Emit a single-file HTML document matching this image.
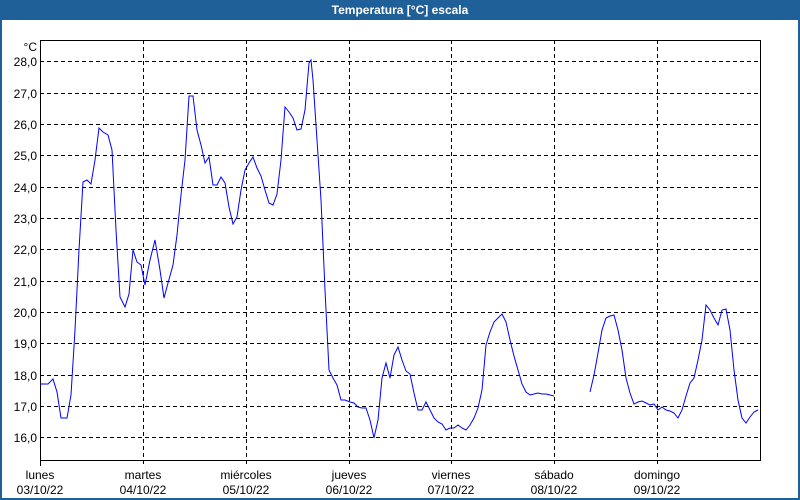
<!DOCTYPE html>
<html><head><meta charset="utf-8"><style>
html,body{margin:0;padding:0;width:800px;height:500px;overflow:hidden;background:#fff}
</style></head><body>
<svg width="800" height="500" xmlns="http://www.w3.org/2000/svg" font-family="Liberation Sans, sans-serif">
<rect x="0" y="0" width="800" height="500" fill="#1f6098"/>
<rect x="2" y="20" width="796" height="478" fill="#fff"/>
<text x="400" y="14" fill="#fff" font-size="12" font-weight="bold" text-anchor="middle">Temperatura [°C] escala</text>
<g stroke="#000" stroke-dasharray="4,3" stroke-width="1">
<line x1="40" x2="760" y1="61.5" y2="61.5"/><line x1="40" x2="760" y1="93.5" y2="93.5"/><line x1="40" x2="760" y1="124.5" y2="124.5"/><line x1="40" x2="760" y1="155.5" y2="155.5"/><line x1="40" x2="760" y1="187.5" y2="187.5"/><line x1="40" x2="760" y1="218.5" y2="218.5"/><line x1="40" x2="760" y1="249.5" y2="249.5"/><line x1="40" x2="760" y1="281.5" y2="281.5"/><line x1="40" x2="760" y1="312.5" y2="312.5"/><line x1="40" x2="760" y1="343.5" y2="343.5"/><line x1="40" x2="760" y1="375.5" y2="375.5"/><line x1="40" x2="760" y1="406.5" y2="406.5"/><line x1="40" x2="760" y1="437.5" y2="437.5"/>
<line y1="40" y2="466" x1="143.5" x2="143.5"/><line y1="40" y2="466" x1="246.5" x2="246.5"/><line y1="40" y2="466" x1="349.5" x2="349.5"/><line y1="40" y2="466" x1="451.5" x2="451.5"/><line y1="40" y2="466" x1="554.5" x2="554.5"/><line y1="40" y2="466" x1="657.5" x2="657.5"/>
</g>
<rect x="40.5" y="40.5" width="720" height="420" fill="none" stroke="#000"/>
<line x1="40.5" x2="40.5" y1="460" y2="466" stroke="#000"/>
<g font-size="12" fill="#000" text-anchor="end">
<text x="37" y="51">°C</text>
<text x="37" y="66">28,0</text><text x="37" y="98">27,0</text><text x="37" y="129">26,0</text><text x="37" y="160">25,0</text><text x="37" y="192">24,0</text><text x="37" y="223">23,0</text><text x="37" y="254">22,0</text><text x="37" y="286">21,0</text><text x="37" y="317">20,0</text><text x="37" y="348">19,0</text><text x="37" y="380">18,0</text><text x="37" y="411">17,0</text><text x="37" y="442">16,0</text>
</g>
<g font-size="12" fill="#000" text-anchor="middle">
<text x="40" y="479">lunes</text><text x="40" y="494">03/10/22</text>
<text x="143" y="479">martes</text><text x="143" y="494">04/10/22</text>
<text x="246" y="479">miércoles</text><text x="246" y="494">05/10/22</text>
<text x="349" y="479">jueves</text><text x="349" y="494">06/10/22</text>
<text x="451" y="479">viernes</text><text x="451" y="494">07/10/22</text>
<text x="554" y="479">sábado</text><text x="554" y="494">08/10/22</text>
<text x="657" y="479">domingo</text><text x="657" y="494">09/10/22</text>
</g>
<g fill="none" stroke="#0000ff" stroke-width="1">
<polyline points="40,384 48,384 53,379 57,392 61,418 67,418 71,395 75,330 79,250 83,182 87,180 91,184 95,160 99,128 103,132 108,135 112,150 116,230 120,297 125,307 129,294 133,250 137,262 141,265 145,285 150,260 155,240 160,270 164,298 168,283 173,265 177,235 181,195 185,160 189,96 193,96 197,130 201,145 205,163 209,157 213,185 217,185 221,177 225,183 229,207 233,224 237,217 241,190 245,170 249,163 253,157 257,168 261,176 265,190 269,203 273,205 277,194 281,160 285,107 289,112 293,118 297,130 301,129 305,110 309,63 311,60 313,80 317,140 321,200 325,290 329,370 333,378 337,385 341,400 345,400 350,402 354,403 358,407 362,408 366,408 370,420 374,438 378,420 382,378 386,363 390,378 394,355 398,347 402,360 406,371 410,374 414,393 418,410 422,410 426,402 430,410 434,418 438,422 442,424 446,430 450,428 454,428 458,425 462,428 466,430 470,425 474,418 478,408 482,390 486,345 490,332 494,322 498,318 502,314 506,322 510,340 514,356 518,370 522,384 526,392 530,395 534,394 538,393 542,394 546,394 550,395 554,396"/>
<polyline points="590,392 594,375 598,353 602,330 606,318 610,316 614,315 618,330 622,350 626,378 630,393 634,404 638,402 642,401 646,403 650,405 654,404 658,410 662,407 666,410 670,411 674,413 678,418 682,410 686,396 690,383 694,378 698,360 702,340 706,305 710,310 714,318 718,325 722,310 726,309 730,330 734,370 738,400 742,418 746,423 750,417 754,412 758,410"/>
</g>
</svg>
</body></html>
